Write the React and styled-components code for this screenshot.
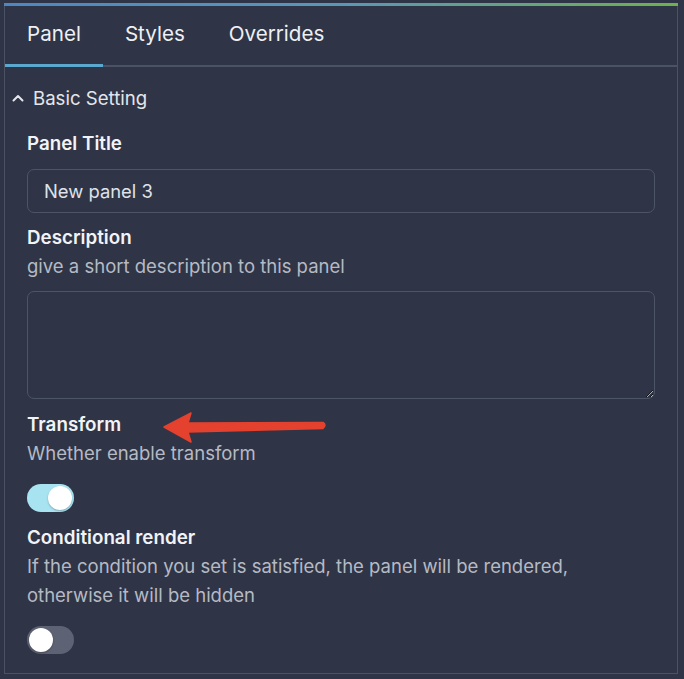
import React, { useState } from "react";
import styled, { createGlobalStyle } from "styled-components";

const GlobalStyle = createGlobalStyle`
  html, body {
    margin: 0;
    padding: 0;
    background: #2f3546;
    font-family: Inter, "Noto Sans", sans-serif;
    color: #eceef2;
  }
`;

const Page = styled.div`
  padding: 3px 6px 5px 4px;
  height: 679px;
  box-sizing: border-box;
  display: flex;
  flex-direction: column;
`;

const TopBar = styled.div`
  height: 3px;
  background: linear-gradient(90deg, #4f86c0 0%, #5c96b6 50%, #6fb04e 100%);
`;

const Frame = styled.div`
  flex: 1;
  border: 1px solid #4b5263;
  border-top: none;
  display: flex;
  flex-direction: column;
  position: relative;
`;

const TabList = styled.div`
  display: flex;
  height: 61px;
  box-shadow: inset 0 -2px 0 #4b5263;
`;

const Tab = styled.button`
  background: none;
  border: none;
  border-bottom: 3px solid ${(p) => (p.$active ? "#5aa7cf" : "transparent")};
  color: #eef0f4;
  font-family: inherit;
  font-size: 20.6px;
  padding: 0 22px 3px;
  margin: 0;
  cursor: pointer;
`;

const SectionHeader = styled.div`
  display: flex;
  align-items: center;
  gap: 9px;
  padding: 17px 0 0 7px;
  height: 28px;
  font-size: 18.6px;
  color: #e4e6eb;
`;

const Body = styled.div`
  display: flex;
  flex-direction: column;
  padding: 18px 22px 0 22px;
`;

const Label = styled.div`
  font-size: 18.8px;
  font-weight: 600;
  line-height: 28px;
  color: #f2f3f6;
  margin-top: ${(p) => p.$top || 0}px;
`;

const Help = styled.div`
  font-size: 18.5px;
  line-height: 29px;
  color: #b6bac4;
`;

const TextInput = styled.input`
  margin-top: 11px;
  height: 44px;
  box-sizing: border-box;
  border: 1px solid #4d5466;
  border-radius: 7px;
  background: transparent;
  color: #dfe2e8;
  font-family: inherit;
  font-size: 18.4px;
  padding: 0 16px;
  outline: none;
`;

const TextArea = styled.textarea`
  margin-top: 10px;
  height: 108px;
  box-sizing: border-box;
  border: 1px solid #4d5466;
  border-radius: 7px;
  background: transparent;
  color: #dfe2e8;
  font-family: inherit;
  font-size: 18px;
  padding: 10px 16px;
  outline: none;
  resize: vertical;
`;

const Track = styled.button`
  margin-top: 16px;
  width: 47px;
  height: 28px;
  border: none;
  border-radius: 14px;
  padding: 0 2px;
  display: flex;
  align-items: center;
  justify-content: ${(p) => (p.$on ? "flex-end" : "flex-start")};
  background: ${(p) => (p.$on ? "#a8e3f1" : "#5d6274")};
  cursor: pointer;
`;

const Knob = styled.span`
  width: 24px;
  height: 24px;
  border-radius: 50%;
  background: #ffffff;
  box-shadow: 0 1px 2px rgba(0, 0, 0, 0.25);
`;

const Arrow = styled.svg`
  position: absolute;
  left: 155px;
  top: 402px;
`;

function Toggle({ initial }) {
  const [on, setOn] = useState(initial);
  return (
    <Track $on={on} onClick={() => setOn(!on)}>
      <Knob />
    </Track>
  );
}

export default function App() {
  const [tab, setTab] = useState("Panel");
  return (
    <>
      <GlobalStyle />
      <Page>
        <TopBar />
        <Frame>
          <TabList>
            {["Panel", "Styles", "Overrides"].map((t) => (
              <Tab key={t} $active={t === tab} onClick={() => setTab(t)}>
                {t}
              </Tab>
            ))}
          </TabList>
          <SectionHeader>
            <svg width="12" height="8" viewBox="0 0 12 8">
              <path d="M1.5 6.5 L6 2 L10.5 6.5" fill="none" stroke="#e4e6eb" strokeWidth="2" strokeLinecap="round" strokeLinejoin="round" />
            </svg>
            Basic Setting
          </SectionHeader>
          <Body>
            <Label>Panel Title</Label>
            <TextInput defaultValue="New panel 3" />
            <Label $top={11}>Description</Label>
            <Help>give a short description to this panel</Help>
            <TextArea />
            <Label $top={12}>Transform</Label>
            <Help>Whether enable transform</Help>
            <Toggle initial={true} />
            <Label $top={12}>Conditional render</Label>
            <Help>
              If the condition you set is satisfied, the panel will be rendered,
              <br />
              otherwise it will be hidden
            </Help>
            <Toggle initial={false} />
          </Body>
          <Arrow width="172" height="40" viewBox="0 0 172 40">
            <path
              d="M4 19 L31 5 L28 15 L163 14.5 Q167 17 163 20.5 L28 24 L31 34 Z"
              fill="#e5412f"
              stroke="#e5412f"
              strokeWidth="1.5"
              strokeLinejoin="round"
            />
          </Arrow>
        </Frame>
      </Page>
    </>
  );
}
